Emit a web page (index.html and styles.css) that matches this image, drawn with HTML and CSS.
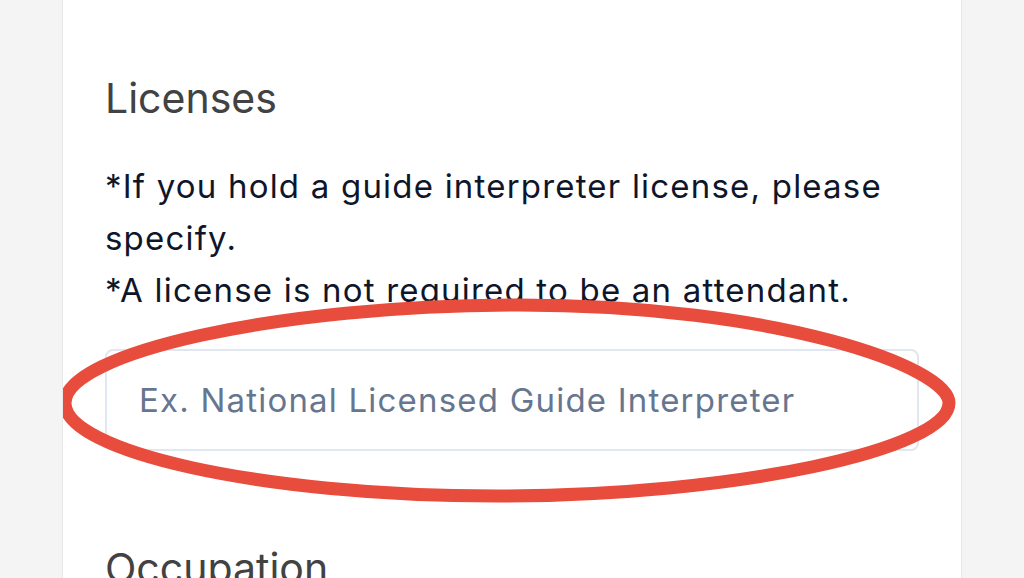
FILE: index.html
```html
<!DOCTYPE html>
<html lang="en">
<head>
    <meta charset="UTF-8">
    <meta name="viewport" content="width=device-width, initial-scale=1.0">
    <title>Licenses</title>
    <link rel="stylesheet" href="styles.css">
</head>
<body>
    <div class="card">
        <section class="field">
            <h2 class="field-title">Licenses</h2>
            <p class="field-note">*If you hold a guide interpreter license, please specify.<br>*A license is not required to be an attendant.</p>
            <div class="input-wrap">
                <input type="text" class="text-input" placeholder="Ex. National Licensed Guide Interpreter">
                <!-- red hand-drawn circle over the input -->
                <svg class="mark" width="900" height="220" viewBox="0 0 900 220">
                    <path d="M462 14 C720 14 892 76 892 112 C892 158 680 205 440 205 C200 205 8 160 8 112 C8 62 220 14 462 14 Z" fill="none" stroke="#e84c3d" stroke-width="13"/>
                </svg>
            </div>
        </section>
        <section class="field">
            <h2 class="field-title">Occupation</h2>
        </section>
    </div>
</body>
</html>
```

FILE: styles.css
```css
body{
    margin: 0;
    background: #f4f4f4;
    font-family: Inter, "Noto Sans", sans-serif;
}
.card{
    margin: 0 62px;
    padding: 73px 42px 0;
    height: 578px;
    box-sizing: border-box;
    background: #fff;
    border-left: 1px solid #e8e8e8;
    border-right: 1px solid #e8e8e8;
    overflow: hidden;
}
.field{
    margin-bottom: 92px;
}
.field-title{
    margin: 0;
    font-size: 41px;
    line-height: 50px;
    font-weight: 400;
    color: #424242;
}
.field-note{
    margin: 37px 0 33px;
    font-size: 33px;
    line-height: 52px;
    letter-spacing: 1.2px;
    color: #10162a;
}
.input-wrap{
    position: relative;
}
.text-input{
    display: block;
    width: 100%;
    height: 102px;
    box-sizing: border-box;
    padding: 0 32px;
    border: 2px solid #e1e7f0;
    border-radius: 8px;
    font-family: Inter, "Noto Sans", sans-serif;
    font-size: 33px;
    letter-spacing: 1.2px;
    color: #10162a;
    background: #fff;
}
.text-input::placeholder{
    color: #66768f;
}
.mark{
    position: absolute;
    left: -48px;
    top: -58px;
    pointer-events: none;
}
```
